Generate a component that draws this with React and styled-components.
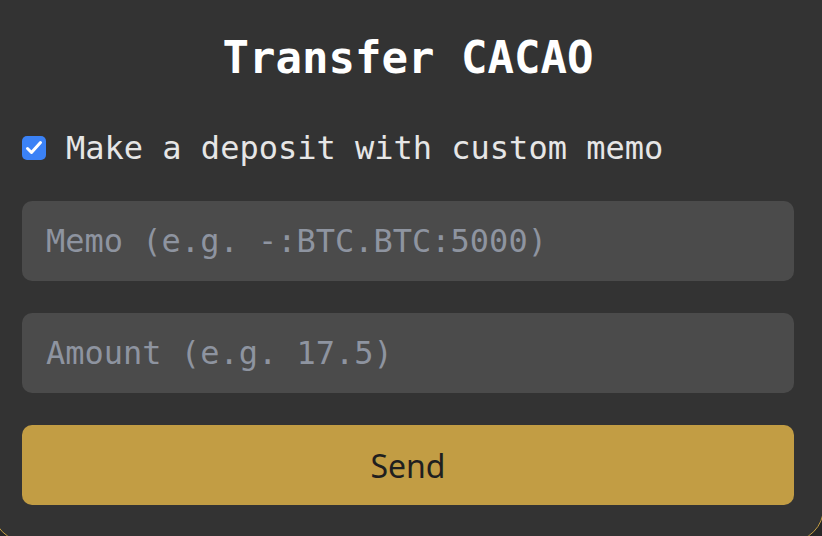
import React from 'react';
import styled, { createGlobalStyle } from 'styled-components';

const GlobalStyle = createGlobalStyle`
  html, body {
    margin: 0;
    padding: 0;
    height: 536px;
    overflow: hidden;
    background: #262626;
  }
  * { box-sizing: border-box; }
`;

const mono = `"DejaVu Sans Mono", "Liberation Mono", monospace`;

const Card = styled.div`
  width: 832px;
  height: 582px;
  margin: -40px 0 0 -8px;
  padding: 69px 29px 36px;
  display: flex;
  flex-direction: column;
  background: #333333;
  border: 1px solid #c29d44;
  border-radius: 34px;
`;

const Title = styled.h2`
  margin: 0;
  height: 56px;
  line-height: 56px;
  text-align: center;
  font-family: ${mono};
  font-size: 44px;
  font-weight: 700;
  color: #ffffff;
`;

const CheckRow = styled.label`
  margin-top: 42px;
  height: 40px;
  display: flex;
  align-items: center;
  gap: 20px;
  font-family: ${mono};
  font-size: 32px;
  color: #e6e6e6;
  cursor: pointer;
`;

const Box = styled.span`
  width: 24px;
  height: 24px;
  border-radius: 5px;
  background: #3b82f6;
  display: flex;
  align-items: center;
  justify-content: center;
  flex-shrink: 0;
`;

const Input = styled.input`
  margin-top: ${(p) => p.$gap || 32}px;
  height: 80px;
  width: 100%;
  border: none;
  outline: none;
  border-radius: 10px;
  background: #4b4b4b;
  padding: 0 24px;
  font-family: ${mono};
  font-size: 32px;
  color: #e6e6e6;
  &::placeholder {
    color: #8e94a0;
  }
`;

const Button = styled.button`
  margin-top: 32px;
  height: 80px;
  width: 100%;
  border: none;
  border-radius: 10px;
  background: #c29d44;
  color: #1f1f1f;
  font-family: "Noto Sans", "Open Sans", sans-serif;
  font-size: 32px;
  cursor: pointer;
`;

export default function App() {
  return (
    <>
      <GlobalStyle />
      <Card>
        <Title>Transfer CACAO</Title>
        <CheckRow>
          <Box>
            <svg width="20" height="20" viewBox="0 0 20 20" fill="none">
              <path d="M3.5 10.5l4 4 9-10" stroke="#fff" strokeWidth="3" strokeLinecap="round" strokeLinejoin="round" />
            </svg>
          </Box>
          Make a deposit with custom memo
        </CheckRow>
        <Input $gap={33} placeholder="Memo (e.g. -:BTC.BTC:5000)" />
        <Input placeholder="Amount (e.g. 17.5)" />
        <Button>Send</Button>
      </Card>
    </>
  );
}
